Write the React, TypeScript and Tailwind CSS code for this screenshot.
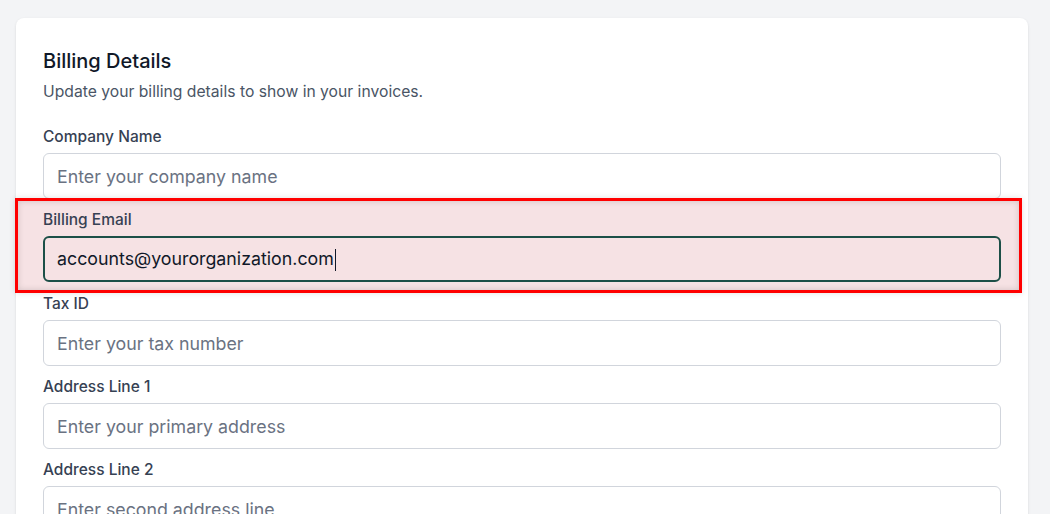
import React from "react";

type Field = {
  label: string;
  placeholder: string;
};

const fields: Field[] = [
  { label: "Tax ID", placeholder: "Enter your tax number" },
  { label: "Address Line 1", placeholder: "Enter your primary address" },
  { label: "Address Line 2", placeholder: "Enter second address line" },
  { label: "City", placeholder: "Enter your city" },
];

function TextField({ label, placeholder }: Field) {
  return (
    <div className="flex flex-col">
      <label className="mb-[6px] h-[21px] pt-px text-[15.5px] leading-5 font-medium text-gray-700">{label}</label>
      <input
        className="h-[46px] w-full rounded-md border border-gray-300 bg-white px-[13px] text-[17.8px] text-gray-900 outline-none placeholder:text-gray-500"
        placeholder={placeholder}
      />
    </div>
  );
}

export default function App() {
  return (
    <div
      className="h-screen overflow-hidden bg-gray-100 pt-[18px] pl-4 pr-[22px]"
      style={{ fontFamily: "Inter, 'Noto Sans', sans-serif" }}
    >
      <div className="rounded-lg bg-white px-[27px] pt-[29px] pb-8 shadow-sm">
        <h2 className="text-xl leading-7 font-medium text-gray-900">Billing Details</h2>
        <p className="mt-[7px] text-[15.7px] leading-5 text-gray-600">
          Update your billing details to show in your invoices.
        </p>

        <div className="mt-[24px] flex flex-col gap-[10px]">
          <TextField label="Company Name" placeholder="Enter your company name" />

          {/* highlighted field */}
          <div className="-mt-[11px] -mb-[10px] -ml-[28px] -mr-[21px] border-[3px] border-[#ff0000] bg-[#f6e2e4] pt-2 pb-2 pl-[25px] pr-[18px] shadow-[inset_0_0_6px_rgba(0,0,0,0.15),0_0_6px_rgba(0,0,0,0.12)]">
            <div className="flex flex-col">
              <label className="mb-[6px] h-[21px] pt-px text-[15.5px] leading-5 font-medium text-gray-700">Billing Email</label>
              <div className="flex h-[46px] items-center rounded-md border-2 border-[#1c4f47] px-[12px] pt-px text-[17.8px] text-gray-900">
                accounts@yourorganization.com
                <span className="ml-px inline-block h-[22px] w-px bg-gray-900" />
              </div>
            </div>
          </div>

          {fields.map((f) => (
            <TextField key={f.label} label={f.label} placeholder={f.placeholder} />
          ))}
        </div>
      </div>
    </div>
  );
}
